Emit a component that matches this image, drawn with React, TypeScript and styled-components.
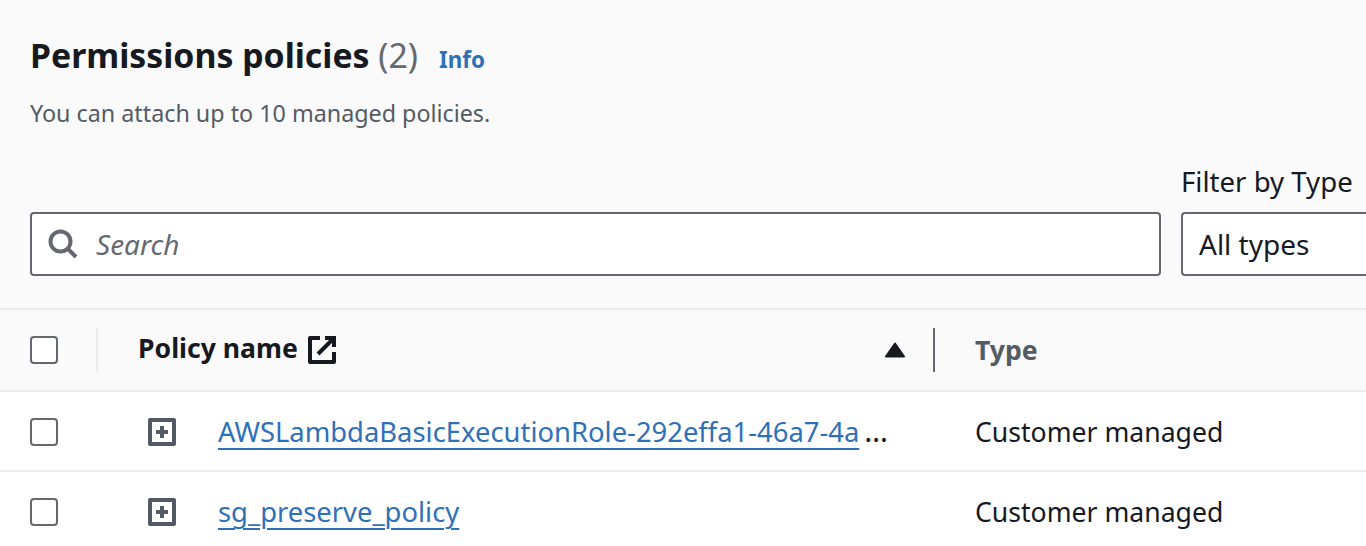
import styled, { createGlobalStyle } from "styled-components";

const GlobalStyle = createGlobalStyle`
  html, body {
    margin: 0;
    padding: 0;
    background: #fafafa;
    overflow: hidden;
  }
  * {
    box-sizing: border-box;
  }
`;

const policies = [
  { name: "AWSLambdaBasicExecutionRole-292effa1-46a7-4a", truncated: true, type: "Customer managed" },
  { name: "sg_preserve_policy", truncated: false, type: "Customer managed" },
];

const SearchIcon = () => (
  <svg width="30" height="30" viewBox="0 0 30 30" fill="none">
    <circle cx="12.5" cy="12.5" r="10" stroke="#656871" strokeWidth="4" />
    <path d="M19.5 19.5L28 28" stroke="#656871" strokeWidth="4" />
  </svg>
);

const ExternalIcon = () => (
  <svg width="28" height="28" viewBox="0 0 28 28" fill="none">
    <path d="M12 2H2v24h24V16" stroke="#16191f" strokeWidth="4" strokeLinejoin="round" />
    <path d="M17 2h9v9M26 2L10 18" stroke="#16191f" strokeWidth="4" />
  </svg>
);

const ExpandIcon = () => (
  <svg width="28" height="28" viewBox="0 0 28 28" fill="none">
    <rect x="2" y="2" width="24" height="24" stroke="#545b64" strokeWidth="4" strokeLinejoin="round" />
    <path d="M14 8v12M8 14h12" stroke="#545b64" strokeWidth="4" />
  </svg>
);

const SortArrow = () => (
  <svg width="20" height="16" viewBox="0 0 20 16">
    <path d="M10 1.500L19 14.500H1Z" fill="#16191f" stroke="#16191f" strokeWidth="2" strokeLinejoin="round" />
  </svg>
);

const App = () => (
  <Page>
    <GlobalStyle />
    <Header>
      <TitleRow>
        <Title>
          Permissions policies <Count>(2)</Count>
        </Title>
        <InfoLink>Info</InfoLink>
      </TitleRow>
      <Description>You can attach up to 10 managed policies.</Description>
    </Header>
    <Toolbar>
      <SearchBox>
        <SearchIcon />
        <Placeholder>Search</Placeholder>
      </SearchBox>
      <FilterField>
        <FilterLabel>Filter by Type</FilterLabel>
        <SelectBox>All types</SelectBox>
      </FilterField>
    </Toolbar>
    <HeadRow>
      <CheckCell>
        <Checkbox />
      </CheckCell>
      <Divider />
      <NameHead>
        <HeadLabel>Policy name</HeadLabel>
        <ExternalIcon />
        <SortSlot>
          <SortArrow />
        </SortSlot>
      </NameHead>
      <Divider $dark />
      <TypeHead>Type</TypeHead>
    </HeadRow>
    {policies.map((policy) => (
      <Row key={policy.name}>
        <CheckCell>
          <Checkbox />
        </CheckCell>
        <ExpandCell>
          <ExpandIcon />
        </ExpandCell>
        <NameCell>
          <PolicyLink>{policy.name}</PolicyLink>
          {policy.truncated && <Ellipsis>…</Ellipsis>}
        </NameCell>
        <TypeCell>{policy.type}</TypeCell>
      </Row>
    ))}
  </Page>
);

const Page = styled.div`
  width: 1366px;
  height: 546px;
  overflow: hidden;
  background: #fafafa;
  font-family: "Noto Sans", "Open Sans", sans-serif;
  color: #16191f;
`;

const Header = styled.div`
  padding: 30px 0 0 30px;
  height: 164px;
`;

const TitleRow = styled.div`
  display: flex;
  align-items: baseline;
  gap: 21px;
  height: 50px;
`;

const Title = styled.h2`
  margin: 0;
  font-size: 33.8px;
  line-height: 50px;
  font-weight: 700;
  white-space: nowrap;
`;

const Count = styled.span`
  font-weight: 400;
  color: #656871;
`;

const InfoLink = styled.a`
  font-size: 22.4px;
  font-weight: 700;
  color: #2f71b8;
`;

const Description = styled.p`
  margin: 18px 0 0;
  font-size: 23.3px;
  line-height: 30px;
  color: #545b64;
`;

const Toolbar = styled.div`
  display: flex;
  align-items: flex-end;
  gap: 20px;
  padding-left: 30px;
  height: 144px;
  padding-bottom: 32px;
`;

const SearchBox = styled.div`
  flex: 0 0 1131px;
  height: 64px;
  display: flex;
  align-items: center;
  gap: 18px;
  padding-left: 16px;
  background: #fff;
  border: 2px solid #656871;
  border-radius: 4px;
`;

const Placeholder = styled.span`
  font-size: 28px;
  font-style: italic;
  color: #656871;
`;

const FilterField = styled.div`
  flex: 0 0 240px;
  display: flex;
  flex-direction: column;
  gap: 13px;
`;

const FilterLabel = styled.label`
  font-size: 27.6px;
  line-height: 36px;
`;

const SelectBox = styled.div`
  height: 64px;
  display: flex;
  align-items: center;
  padding-left: 16px;
  font-size: 28px;
  background: #fff;
  border: 2px solid #656871;
  border-right: 0;
  border-radius: 4px 0 0 4px;
`;

const HeadRow = styled.div`
  display: flex;
  align-items: center;
  height: 84px;
  border-top: 2px solid #eaeded;
  border-bottom: 2px solid #eaeded;
`;

const Row = styled.div`
  display: flex;
  align-items: center;
  height: 80px;
  padding-top: 2px;
  background: #fff;
  border-bottom: 2px solid #eaeded;
`;

const CheckCell = styled.div`
  flex: 0 0 96px;
  padding-left: 30px;
  display: flex;
  align-items: center;
`;

const Checkbox = styled.div`
  width: 28px;
  height: 28px;
  background: #fff;
  border: 2px solid #656871;
  border-radius: 4px;
`;

const Divider = styled.div<{ $dark?: boolean }>`
  width: 2px;
  height: 44px;
  background: ${(p) => (p.$dark ? "#656871" : "#eaeded")};
`;

const NameHead = styled.div`
  flex: 0 0 835px;
  display: flex;
  align-items: center;
  gap: 10px;
  padding-left: 40px;
  padding-right: 28px;
`;

const HeadLabel = styled.span`
  font-size: 26.6px;
  font-weight: 700;
  margin-top: -5px;
`;

const SortSlot = styled.span`
  margin-left: auto;
  display: flex;
`;

const TypeHead = styled.div`
  padding-left: 40px;
  font-size: 26.6px;
  font-weight: 700;
  color: #545b64;
`;

const ExpandCell = styled.div`
  flex: 0 0 122px;
  padding-left: 52px;
  display: flex;
  align-items: center;
`;

const NameCell = styled.div`
  flex: 0 0 757px;
  white-space: nowrap;
  font-size: 27.4px;
  line-height: 38px;
  color: #2f71b8;
`;

const PolicyLink = styled.a`
  color: #2f71b8;
  text-decoration: underline;
  text-decoration-thickness: 2px;
  text-underline-offset: 6px;
`;

const Ellipsis = styled.span`
  margin-left: 5px;
  font-size: 30px;
  line-height: 1;
  color: #16191f;
`;

const TypeCell = styled.div`
  font-size: 26.6px;
`;

export default App;
